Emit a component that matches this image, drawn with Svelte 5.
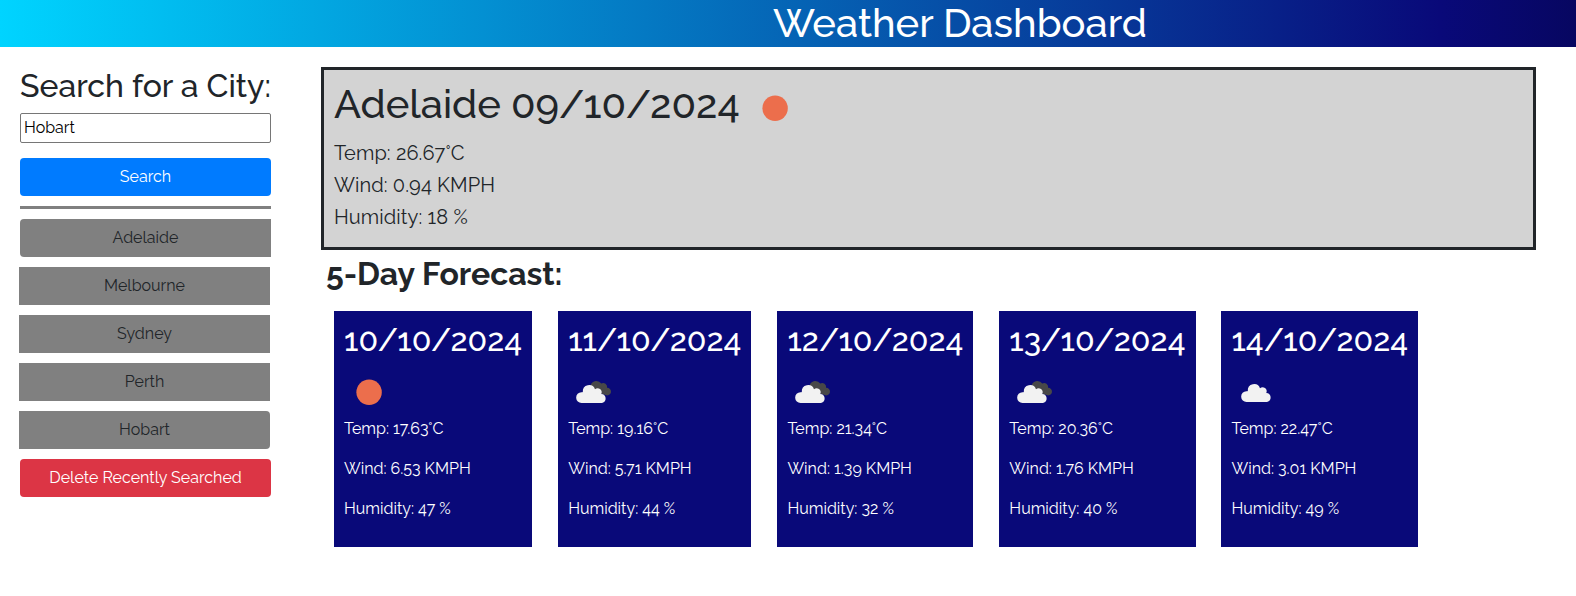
<script>
  const cities = ['Adelaide', 'Melbourne', 'Sydney', 'Perth', 'Hobart'];
  const today = ['Temp: 26.67°C', 'Wind: 0.94 KMPH', 'Humidity: 18 %'];
  const days = [
    { date: '10/10/2024', icon: 'sun', lines: ['Temp: 17.63°C', 'Wind: 6.53 KMPH', 'Humidity: 47 %'] },
    { date: '11/10/2024', icon: 'clouds', lines: ['Temp: 19.16°C', 'Wind: 5.71 KMPH', 'Humidity: 44 %'] },
    { date: '12/10/2024', icon: 'clouds', lines: ['Temp: 21.34°C', 'Wind: 1.39 KMPH', 'Humidity: 32 %'] },
    { date: '13/10/2024', icon: 'clouds', lines: ['Temp: 20.36°C', 'Wind: 1.76 KMPH', 'Humidity: 40 %'] },
    { date: '14/10/2024', icon: 'cloud', lines: ['Temp: 22.47°C', 'Wind: 3.01 KMPH', 'Humidity: 49 %'] }
  ];
</script>

{#snippet icon(kind)}
  <svg class="icon" width="50" height="50" viewBox="0 0 50 50" aria-hidden="true">
    {#if kind === 'sun'}
      <circle cx="25.1" cy="25.2" r="12.7" fill="#ec6e4c" />
    {:else}
      {#if kind === 'clouds'}
        <path d="M22.8 17.7a6 6 0 0 1 10.5-1.2a4 4 0 0 1 5.8 4.2a3.9 3.9 0 1 1-1.7 7.4L25.8 24z" fill="#484848" />
      {/if}
      <path transform={kind === 'clouds' ? 'translate(-1.4 1.2)' : 'translate(.6 .2)'} d="M15 34.7a5.3 5.3 0 0 1-.2-10.7a2 2 0 0 0 1.4-.3a6.3 6.3 0 0 1 12.2-2.6a4 4 0 0 1 6.3 4.6a4.55 4.55 0 0 1 .7 9z" fill="#f2f2f2" />
    {/if}
  </svg>
{/snippet}

<div class="page">
  <header><h1>Weather Dashboard</h1></header>
  <div class="body">
    <aside>
      <h2>Search for a City:</h2>
      <div class="field">Hobart</div>
      <button class="btn primary">Search</button>
      <hr />
      <div class="cities">
        {#each cities as city}
          <button class="btn city">{city}</button>
        {/each}
      </div>
      <button class="btn danger">Delete Recently Searched</button>
    </aside>
    <main>
      <section class="today">
        <div class="title">
          <h1>Adelaide 09/10/2024</h1>
          {@render icon('sun')}
        </div>
        {#each today as line}
          <p>{line}</p>
        {/each}
      </section>
      <h2 class="heading">5-Day Forecast:</h2>
      <div class="forecast">
        {#each days as day}
          <article>
            <h2>{day.date}</h2>
            {@render icon(day.icon)}
            {#each day.lines as line}
              <p>{line}</p>
            {/each}
          </article>
        {/each}
      </div>
    </main>
  </div>
</div>

<style>
  :global(body) {
    overflow: hidden;
    background: #fff;
  }
  .page, .page * { box-sizing: border-box; }
  .page {
    width: 1576px;
    height: 596px;
    overflow: hidden;
    color: #212529;
    font: 400 16px/24px Raleway, Lato, sans-serif;
  }
  h1, h2, p { margin: 0; white-space: nowrap; }
  h1, h2 { font-weight: 500; }
  h1 { font-size: 40px; line-height: 48px; }
  h2 { font-size: 32px; line-height: 38px; }
  header {
    width: 1920px;
    height: 47px;
    color: #fff;
    text-align: center;
    background: linear-gradient(90deg, #00d4ff 0%, #090979 75%, #020024 100%);
  }
  header h1 { line-height: 46px; }
  .body { display: flex; gap: 50px; padding: 20px 40px 0 20px; }
  aside { flex: none; width: 251px; }
  .field {
    height: 30px;
    margin-top: 8px;
    padding: 2px 3px;
    border: 1px solid #767676;
    border-radius: 2px;
    color: #000;
    background: #fff;
  }
  .btn {
    display: block;
    width: 100%;
    height: 38px;
    padding: 0;
    border: 0;
    border-radius: 4px;
    color: #fff;
    font: inherit;
    text-align: center;
  }
  .primary { margin-top: 15px; background: #007bff; }
  hr { height: 3px; margin: 10px 0; border: 0; background: gray; }
  .cities { display: grid; gap: 10px; margin-bottom: 10px; }
  .city { color: #212529; background: gray; border-radius: 0; }
  .city + .city { margin-left: -1px; }
  .city:first-child { border-radius: 4px 0 0 4px; }
  .city:last-child { border-radius: 0 4px 4px 0; }
  .danger { background: #dc3545; }
  main { flex: 1; min-width: 0; }
  .today {
    height: 183px;
    padding: 10px;
    border: 3px solid #212529;
    background: lightgray;
  }
  .title { display: flex; height: 57px; }
  .title .icon { margin: 3px 0 0 10px; }
  .today p { font-size: 20px; line-height: 32px; letter-spacing: 0.1px; }
  .heading { padding-left: 5px; margin-top: 5px; font-weight: 700; }
  .forecast { display: flex; gap: 25.94px; padding: 18px 0 0 13px; }
  article {
    flex: none;
    height: 236px;
    padding: 10px;
    color: #fff;
    background: #090979;
  }
  article .icon { display: block; margin-top: 8px; }
  article p { height: 40px; }
</style>
